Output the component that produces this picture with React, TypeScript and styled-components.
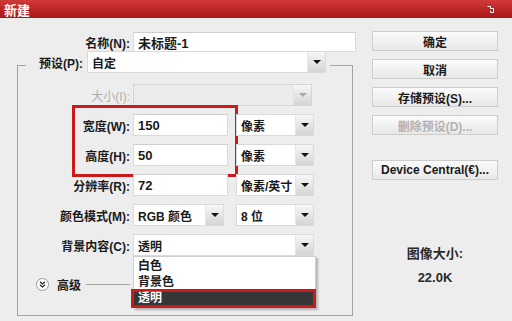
import React from 'react'
import styled, { createGlobalStyle, css } from 'styled-components'

const GlobalStyle = createGlobalStyle`
  html, body {
    margin: 0;
    padding: 0;
    background: #ededed;
  }
  * {
    box-sizing: border-box;
  }
`

const FONT = `"Liberation Sans", "Noto Sans CJK SC", sans-serif`

const Dialog = styled.div`
  width: 512px;
  height: 321px;
  background: #ededed;
  font-family: ${FONT};
  font-size: 12px;
  font-weight: 700;
  color: #1a1a1a;
  overflow: hidden;
`

const TitleBar = styled.div`
  height: 18px;
  display: flex;
  align-items: center;
  justify-content: space-between;
  padding: 0 18px 0 4px;
  background: linear-gradient(#d23a3a, #b82222 60%, #a81a1a);
  color: #fff;
  font-size: 13px;
`

const Body = styled.div`
  display: flex;
`

const LeftCol = styled.div`
  width: 360px;
  padding-top: 13px;
`

const Row = styled.div`
  display: flex;
  align-items: center;
  gap: 3px;
  height: 22px;
  position: relative;
`

const Label = styled.div<{ $w: number; $disabled?: boolean }>`
  width: ${p => p.$w}px;
  text-align: right;
  white-space: nowrap;
  color: ${p => (p.$disabled ? '#b0b0b0' : '#1a1a1a')};
  font-weight: ${p => (p.$disabled ? 400 : 700)};
`

const Input = styled.div<{ $w: number }>`
  width: ${p => p.$w}px;
  height: 22px;
  background: #fff;
  border: 1px solid #dadada;
  border-top-color: #cfcfcf;
  padding: 0 4px;
  display: flex;
  align-items: center;
  font-size: 13px;
`

const Select = styled.div<{ $w: number; $disabled?: boolean; $ml?: number }>`
  width: ${p => p.$w}px;
  height: 22px;
  margin-left: ${p => p.$ml ?? 0}px;
  background: ${p => (p.$disabled ? '#ececec' : '#fff')};
  border: 1px solid ${p => (p.$disabled ? '#d6d6d6' : '#dadada')};
  display: flex;
  align-items: center;
  justify-content: space-between;
  padding-left: 4px;
  position: relative;
  white-space: nowrap;
`

const ArrowBox = styled.span<{ $disabled?: boolean }>`
  width: 18px;
  align-self: stretch;
  display: flex;
  align-items: center;
  justify-content: center;
  background: linear-gradient(#f7f7f7, #d4d4d4);
  border-left: 1px solid #e6e6e6;
  &::after {
    content: '';
    border-left: 4px solid transparent;
    border-right: 4px solid transparent;
    border-top: 4px solid ${p => (p.$disabled ? '#a8a8a8' : '#111')};
  }
`

const Group = styled.fieldset`
  margin: 0 0 0 17px;
  width: 336px;
  padding: 11px 0 22px 0;
  border: 1px solid #a4a4a4;
  position: relative;
`

const Legend = styled.legend`
  margin-left: 8px;
  padding: 0 4px;
  height: 16px;
  display: flex;
  gap: 4px;
  align-items: flex-start;
`

const LegendInner = styled.div`
  display: flex;
  align-items: center;
  gap: 4px;
  margin-top: -6px;
  height: 22px;
`

const Rows = styled.div`
  display: flex;
  flex-direction: column;
  gap: 8px;
`

const Highlight = styled.div`
  display: flex;
  flex-direction: column;
  gap: 8px;
  position: relative;
  &::before {
    content: '';
    position: absolute;
    left: 54px;
    top: -9px;
    width: 160px;
    height: 66px;
    border: 3px solid #cc1a1a;
    pointer-events: none;
  }
`

const Advanced = styled.div`
  display: flex;
  align-items: center;
  height: 18px;
  margin: 19px 0 0 18px;
  gap: 8px;
`

const Twisty = styled.span`
  width: 13px;
  height: 13px;
  border-radius: 50%;
  background: #fff;
  border: 1px solid #9a9a9a;
  display: flex;
  align-items: center;
  justify-content: center;
`

const Rule = styled.span`
  width: 44px;
  height: 1px;
  background: #a4a4a4;
  margin-left: -3px;
`

const DropList = styled.div`
  position: absolute;
  left: -1px;
  top: 21px;
  width: 183px;
  background: #fff;
  border: 1px solid #cfcfcf;
  box-shadow: 2px 2px 2px rgba(0, 0, 0, 0.25);
  padding-top: 1px;
  z-index: 2;
`

const DropItem = styled.div<{ $active?: boolean }>`
  height: 16px;
  line-height: 16px;
  padding-left: 4px;
  font-size: 12px;
  ${p =>
    p.$active &&
    css`
      background: #363636;
      color: #fff;
      height: 13px;
      line-height: 13px;
      margin: 2px 2px 2px 0;
      box-shadow: 0 0 0 3px #cc1a1a;
    `}
`

const RightCol = styled.div`
  margin: 13px 0 0 12px;
  width: 126px;
  display: flex;
  flex-direction: column;
  gap: 8px;
`

const Button = styled.div<{ $disabled?: boolean; $mt?: number }>`
  height: 20px;
  margin-top: ${p => p.$mt ?? 0}px;
  display: flex;
  align-items: center;
  justify-content: center;
  background: linear-gradient(#fbfbfb, #e8e8e8);
  border: 1px solid #cdcdcd;
  color: ${p => (p.$disabled ? '#b2b2b2' : '#1a1a1a')};
  font-size: 12px;
  white-space: nowrap;
`

const SizeInfo = styled.div`
  margin-top: 55px;
  display: flex;
  flex-direction: column;
  align-items: center;
  gap: 8px;
  font-size: 13px;
  color: #2a2a2a;
`

function Arrow({ disabled }: { disabled?: boolean }) {
  return <ArrowBox $disabled={disabled} />
}

export default function App() {
  return (
    <Dialog>
      <GlobalStyle />
      <TitleBar>
        <span>新建</span>
        <svg width="7" height="7" viewBox="0 0 7 7">
          <path d="M0.5 0.5h3v2M6.5 6.5h-3v-2M3.5 2.5h3v4" stroke="#fff" fill="none" strokeWidth="1" />
        </svg>
      </TitleBar>
      <Body>
        <LeftCol>
          <Row>
            <Label $w={130}>名称(N):</Label>
            <Input $w={223} style={{ height: 20 }}>未标题-1</Input>
          </Row>
          <div style={{ height: 4 }} />
          <Group>
            <Legend>
              <LegendInner>
                <Label $w={53}>预设(P):</Label>
                <Select $w={239}>
                  自定
                  <Arrow />
                </Select>
              </LegendInner>
            </Legend>
            <Rows>
              <Row>
                <Label $w={112} $disabled>大小(I):</Label>
                <Select $w={179} $disabled>
                  <span />
                  <Arrow disabled />
                </Select>
              </Row>
              <Highlight>
                <Row>
                  <Label $w={112}>宽度(W):</Label>
                  <Input $w={95}>150</Input>
                  <Select $w={78} $ml={5}>
                    像素
                    <Arrow />
                  </Select>
                </Row>
                <Row>
                  <Label $w={112}>高度(H):</Label>
                  <Input $w={95}>50</Input>
                  <Select $w={78} $ml={5}>
                    像素
                    <Arrow />
                  </Select>
                </Row>
              </Highlight>
              <Row>
                <Label $w={112}>分辨率(R):</Label>
                <Input $w={95}>72</Input>
                <Select $w={78} $ml={5}>
                  像素/英寸
                  <Arrow />
                </Select>
              </Row>
              <Row>
                <Label $w={112}>颜色模式(M):</Label>
                <Select $w={91}>
                  RGB 颜色
                  <Arrow />
                </Select>
                <Select $w={78} $ml={9}>
                  8 位
                  <Arrow />
                </Select>
              </Row>
              <Row>
                <Label $w={112}>背景内容(C):</Label>
                <Select $w={181}>
                  透明
                  <Arrow />
                  <DropList>
                    <DropItem>白色</DropItem>
                    <DropItem>背景色</DropItem>
                    <DropItem $active>透明</DropItem>
                  </DropList>
                </Select>
              </Row>
            </Rows>
            <Advanced>
              <Twisty>
                <svg width="7" height="7" viewBox="0 0 7 7">
                  <path d="M1 0.8l2.5 2.2 2.5-2.2M1 3.8l2.5 2.2 2.5-2.2" stroke="#222" strokeWidth="1.2" fill="none" />
                </svg>
              </Twisty>
              <span>高级</span>
              <Rule />
            </Advanced>
          </Group>
        </LeftCol>
        <RightCol>
          <Button>确定</Button>
          <Button>取消</Button>
          <Button>存储预设(S)...</Button>
          <Button $disabled>删除预设(D)...</Button>
          <Button $mt={17}>Device Central(€)...</Button>
          <SizeInfo>
            <span>图像大小:</span>
            <span>22.0K</span>
          </SizeInfo>
        </RightCol>
      </Body>
    </Dialog>
  )
}
